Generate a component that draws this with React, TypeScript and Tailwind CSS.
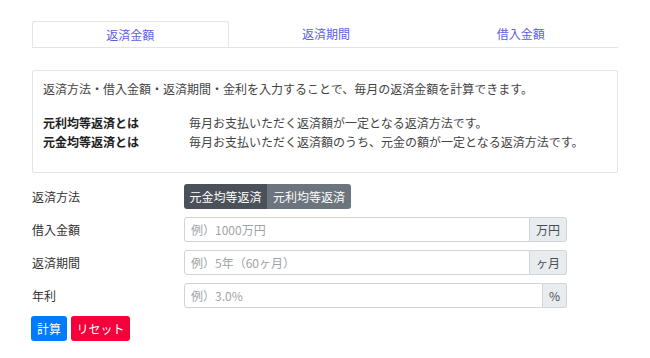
import React from 'react'

const font = { fontFamily: '"Noto Sans CJK JP", "Noto Sans", sans-serif' }

export default function App() {
  const tabs = ['返済金額', '返済期間', '借入金額']

  const inputs = [
    { label: '借入金額', placeholder: '例）1000万円', unit: '万円' },
    { label: '返済期間', placeholder: '例）5年（60ヶ月）', unit: 'ヶ月' },
    { label: '年利', placeholder: '例）3.0%', unit: '%' },
  ]

  return (
    <div className="w-[650px] h-[358px] bg-white text-[12px] text-[#333]" style={font}>
      <div className="pt-[21px] pl-[32px] w-[618px]">
        {/* Tabs */}
        <div className="flex border-b border-[#e1e4e8]">
          {tabs.map((t, i) => (
            <div
              key={t}
              className={
                i === 0
                  ? 'flex-1 h-[26px] flex items-center justify-center text-[#5b5fe0] border border-b-0 border-[#e1e4e8] rounded-t-[3px] bg-white -mb-px'
                  : 'flex-1 h-[26px] flex items-center justify-center text-[#5b5fe0]'
              }
            >
              {t}
            </div>
          ))}
        </div>

        {/* Info */}
        <div className="mt-[22px] border border-[#e1e4e8] rounded-[2px] px-[10px] pt-[8px] pb-[21px] leading-[19px] text-[#444]">
          <p>返済方法・借入金額・返済期間・金利を入力することで、毎月の返済金額を計算できます。</p>
          <div className="mt-[15px] flex">
            <span className="w-[146px] font-bold text-[#222]">元利均等返済とは</span>
            <span>毎月お支払いただく返済額が一定となる返済方法です。</span>
          </div>
          <div className="flex">
            <span className="w-[146px] font-bold text-[#222]">元金均等返済とは</span>
            <span>毎月お支払いただく返済額のうち、元金の額が一定となる返済方法です。</span>
          </div>
        </div>

        {/* Form */}
        <div className="mt-[11px] flex flex-col gap-[8px]">
          <div className="flex items-center h-[25px]">
            <span className="w-[152px]">返済方法</span>
            <div className="flex h-[25px] rounded-[3px] overflow-hidden text-white">
              <span className="w-[83px] flex items-center justify-center bg-[#4a5158]">元金均等返済</span>
              <span className="w-[84px] flex items-center justify-center bg-[#6c757d]">元利均等返済</span>
            </div>
          </div>
          {inputs.map((r) => (
            <div key={r.label} className="flex items-center h-[25px]">
              <span className="w-[152px]">{r.label}</span>
              <div className="flex w-[383px] h-[25px]">
                <div className="flex-1 flex items-center px-[6px] border border-[#ced4da] rounded-l-[3px] text-[#a0a4a8]">
                  {r.placeholder}
                </div>
                <div className="flex items-center px-[6px] bg-[#e9ecef] border border-l-0 border-[#ced4da] rounded-r-[3px] text-[#495057]">
                  {r.unit}
                </div>
              </div>
            </div>
          ))}
          <div className="flex gap-[4px] -ml-px">
            <button className="h-[25px] w-[36px] rounded-[3px] bg-[#007bff] text-white">計算</button>
            <button className="h-[25px] w-[59px] rounded-[3px] bg-[#f5003b] text-white">リセット</button>
          </div>
        </div>
      </div>
    </div>
  )
}
